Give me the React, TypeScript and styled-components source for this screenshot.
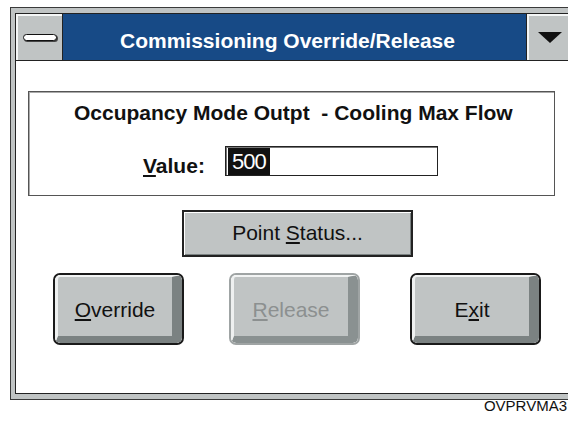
import * as React from 'react'
import styled, { createGlobalStyle, css } from 'styled-components'

const face = '#c0c4c4'
const shade = '#7b8282'
const ink = '#1a1a1a'

const GlobalStyle = createGlobalStyle`
  html, body {
    margin: 0;
    padding: 0;
    background: #fff;
    overflow: hidden;
  }

  body {
    font-family: 'Liberation Sans', Arial, sans-serif;
    color: #111;
  }
`

const Page = styled.div`
  width: 568px;
  height: 423px;
  padding-top: 7px;
  box-sizing: border-box;
`

const Window = styled.div`
  margin-left: 10px;
  width: 570px;
  box-sizing: border-box;
  border: 1px solid #3a3a3a;
  background: ${face};
  padding: 5px 5px 5px 4px;
`

const Inner = styled.div`
  border: 1px solid #222;
  display: flex;
  flex-direction: column;
`

const TitleBar = styled.div`
  display: flex;
  height: 46px;
  border-bottom: 1px solid #222;
`

const chromeButton = css`
  background: ${face};
  box-shadow: inset 2px 2px 0 #f4f6f6;
  display: flex;
  align-items: center;
`

const SysButton = styled.div`
  ${chromeButton};
  width: 46px;
  border-right: 1px solid #222;
  justify-content: center;
`

const Pill = styled.span`
  display: block;
  width: 32px;
  height: 5px;
  margin-left: 2px;
  background: #fff;
  border: 1.5px solid #111;
  border-radius: 4px;
  box-shadow: 1px 1px 0 #444;
`

const Title = styled.div`
  flex: 1;
  background: #174a86;
  color: #fff;
  font-size: 21px;
  font-weight: 700;
  line-height: 24px;
  display: flex;
  align-items: center;
  justify-content: center;
  padding: 8px 14px 0 0;
  box-sizing: border-box;
`

const DropButton = styled.div`
  ${chromeButton};
  width: 47px;
  border-left: 1px solid #222;
  padding-left: 11px;
  box-sizing: border-box;
`

const Body = styled.div`
  height: 332px;
  background: #fff;
  padding: 30px 0 0 12px;
  box-sizing: border-box;
  display: flex;
  flex-direction: column;
`

const GroupBox = styled.div`
  width: 527px;
  height: 105px;
  box-sizing: border-box;
  border: 1px solid #555;
  box-shadow: inset 1px 1px 0 #aaa;
  padding: 9px 0 0 45px;
  display: flex;
  flex-direction: column;
`

const GroupLabel = styled.div`
  font-size: 21px;
  font-weight: 700;
  line-height: 24px;
  white-space: pre;
`

const ValueRow = styled.div`
  display: flex;
  align-items: flex-start;
  margin: 21px 0 0 69px;
`

const ValueLabel = styled.label`
  font-size: 21px;
  font-weight: 700;
  line-height: 24px;
  padding-top: 8px;
  width: 82px;
`

const ValueInput = styled.div`
  width: 213px;
  height: 30px;
  box-sizing: border-box;
  border: 1px solid #222;
  box-shadow: inset 1px 1px 0 #777;
  display: flex;
  align-items: center;
  padding-left: 2px;
`

const Selection = styled.span`
  background: #111;
  color: #fff;
  font-size: 22px;
  letter-spacing: -1px;
  height: 27px;
  line-height: 27px;
  padding: 0 4px 0 4px;
`

const StatusButton = styled.div`
  width: 231px;
  height: 47px;
  margin: 14px 0 0 154px;
  box-sizing: border-box;
  border: 2px solid #222;
  background: ${face};
  box-shadow: inset 1px 1px 0 #fff, inset -1px -1px 0 ${shade};
  display: flex;
  align-items: center;
  justify-content: center;
  font-size: 21px;
  line-height: 24px;
  padding-bottom: 2px;
`

const ButtonRow = styled.div`
  display: flex;
  gap: 45px;
  margin-top: 16px;
  padding-left: 25px;
`

const KeyButton = styled.div<{ $disabled?: boolean }>`
  width: 131px;
  height: 72px;
  box-sizing: border-box;
  border: 2px solid ${(p) => (p.$disabled ? '#9fa4a4' : ink)};
  border-radius: 7px;
  overflow: hidden;
  display: flex;

  &:last-child {
    margin-left: 5px;
  }
`

const KeyFace = styled.div<{ $disabled?: boolean }>`
  flex: 1;
  background: ${face};
  border-style: solid;
  border-width: 2px 10px 7px 3px;
  border-color: #f2f4f4 ${(p) => (p.$disabled ? '#8a9191' : shade)}
    ${(p) => (p.$disabled ? '#8a9191' : shade)} #eef0f0;
  border-radius: 5px;
  display: flex;
  align-items: center;
  justify-content: center;
  padding-top: 6px;
  font-size: 21px;
  line-height: 24px;
  color: ${(p) => (p.$disabled ? '#8c9090' : '#111')};
`

const Footer = styled.div`
  font-size: 15px;
  line-height: 17px;
  text-align: right;
  padding-right: 1px;
  margin-top: -3px;
  color: #111;
`

const Key = ({ label, disabled }: { label: React.ReactNode; disabled?: boolean }) => (
  <KeyButton $disabled={disabled}>
    <KeyFace $disabled={disabled}>{label}</KeyFace>
  </KeyButton>
)

const App = () => (
  <Page>
    <GlobalStyle />
    <Window>
      <Inner>
        <TitleBar>
          <SysButton>
            <Pill />
          </SysButton>
          <Title>Commissioning Override/Release</Title>
          <DropButton>
            <svg width="24" height="11" viewBox="0 0 24 11">
              <polygon points="0,0 24,0 12,11" fill="#111" />
            </svg>
          </DropButton>
        </TitleBar>
        <Body>
          <GroupBox>
            <GroupLabel>Occupancy Mode Outpt  - Cooling Max Flow</GroupLabel>
            <ValueRow>
              <ValueLabel>
                <u>V</u>alue:
              </ValueLabel>
              <ValueInput>
                <Selection>500</Selection>
              </ValueInput>
            </ValueRow>
          </GroupBox>
          <StatusButton>
            <span>
              Point <u>S</u>tatus...
            </span>
          </StatusButton>
          <ButtonRow>
            <Key
              label={
                <span>
                  <u>O</u>verride
                </span>
              }
            />
            <Key
              disabled
              label={
                <span>
                  <u>R</u>elease
                </span>
              }
            />
            <Key
              label={
                <span>
                  E<u>x</u>it
                </span>
              }
            />
          </ButtonRow>
        </Body>
      </Inner>
    </Window>
    <Footer>OVPRVMA3</Footer>
  </Page>
)

export default App
